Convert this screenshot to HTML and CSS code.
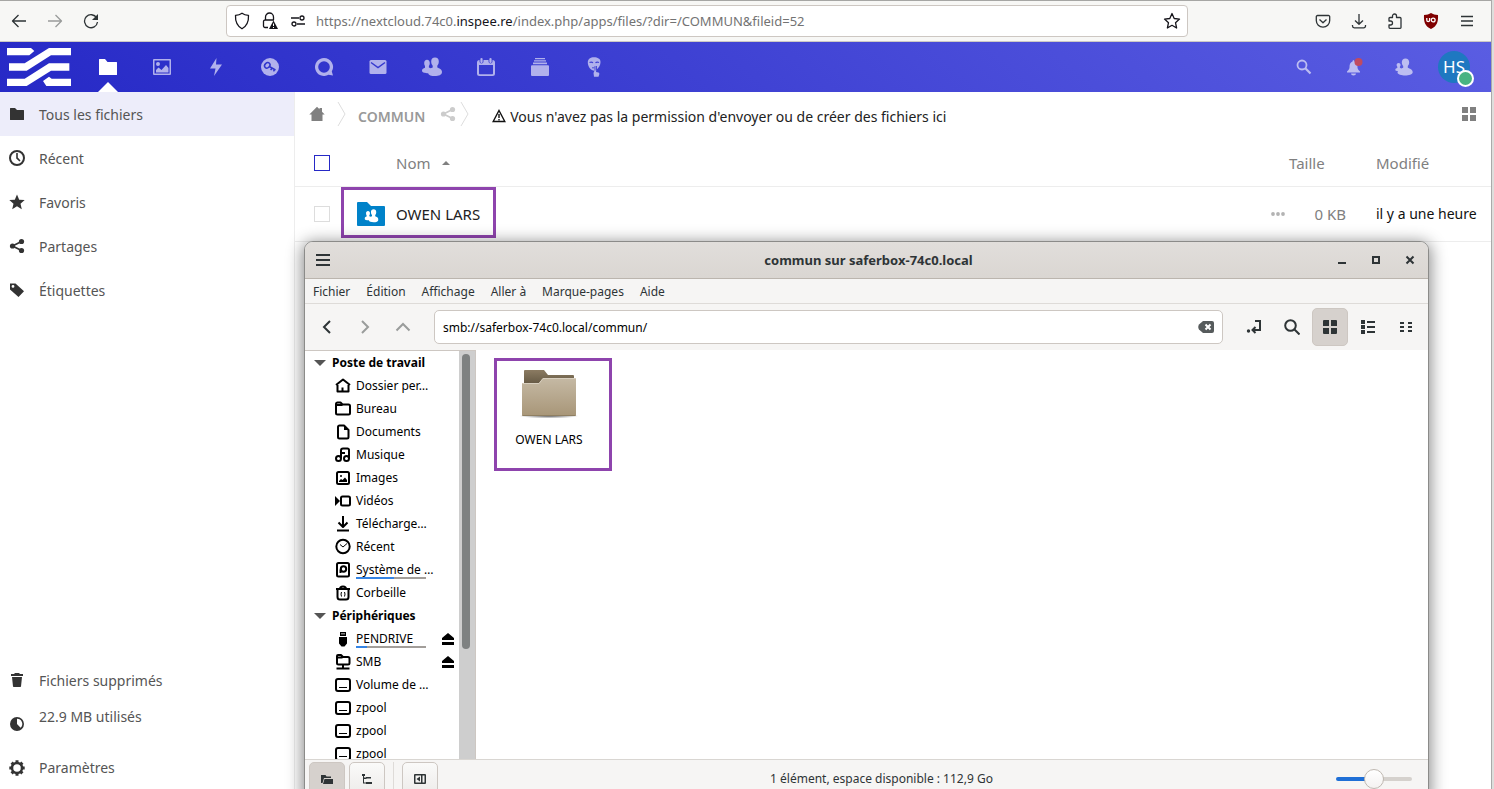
FILE: index.html
```html
<!DOCTYPE html>
<html lang="fr">
<head>
<meta charset="utf-8">
<title>COMMUN - Fichiers</title>
<link rel="stylesheet" href="styles.css">
</head>
<body>
<div class="desktop">
<div class="browser">
  <div class="chrome">
    <button class="tool" aria-label="Précédent"><svg width="16" height="16" viewBox="0 0 16 16"><path class="line" d="M15 8H1.500M7.500 2L1.500 8l6 6"/></svg></button>
    <button class="tool faded" aria-label="Suivant"><svg width="16" height="16" viewBox="0 0 16 16"><path class="line" d="M1 8h13.500M8.500 2l6 6-6 6"/></svg></button>
    <button class="tool" aria-label="Actualiser"><svg width="16" height="16" viewBox="0 0 16 16"><path class="line" d="M13.700 5A6.500 6.500 0 1 0 14.500 9"/><path d="M15 1v6H9z"/></svg></button>
    <div class="address">
      <svg width="16" height="18" viewBox="0 0 16 18"><path class="line" d="M8 1.200c2 1.500 4 2 6.500 2.200C14.800 9.500 13 14 8 16.800 3 14 1.200 9.500 1.500 3.400 4 3.200 6 2.700 8 1.200z"/></svg>
      <svg width="16" height="18" viewBox="0 0 16 18"><path class="line" d="M3.500 8V5a4 4 0 0 1 8 0v3M6 15.500H3a1.500 1.500 0 0 1-1.500-1.500V9.500A1.500 1.500 0 0 1 3 8h9"/><path d="M11.500 8.500L16 17H7z"/><path stroke="#fff" d="M11.500 11.500v2.500M11.500 15v1"/></svg>
      <svg width="16" height="16" viewBox="0 0 16 16"><path class="line" d="M1 5h8M7 11h8"/><circle class="line" cx="12" cy="5" r="2"/><circle class="line" cx="4" cy="11" r="2"/></svg>
      <div class="url" role="textbox" contenteditable="true" spellcheck="false" aria-label="Adresse">https://nextcloud.74c0.<b>inspee.re</b>/index.php/apps/files/?dir=/COMMUN&amp;fileid=52</div>
      <svg width="18" height="18" viewBox="0 0 18 18"><path class="line" d="M9 1.500l2.200 5 5.300.6-4 3.600 1.100 5.300L9 13.300 4.400 16l1.100-5.300-4-3.600 5.300-.6z"/></svg>
    </div>
    <button class="tool" aria-label="Pocket"><svg width="16" height="16" viewBox="0 0 16 16"><path class="line" d="M2.500 2.500h11a1.200 1.200 0 0 1 1.200 1.200V7.500a6.700 6.700 0 0 1-13.400 0V3.700a1.200 1.200 0 0 1 1.200-1.200zM4.500 6.500L8 9.800l3.500-3.300"/></svg></button>
    <button class="tool" aria-label="Téléchargements"><svg width="16" height="16" viewBox="0 0 16 16"><path class="line" d="M8 1v10M4 7.500L8 11.300l4-3.800M1.500 12v1A1.800 1.800 0 0 0 3.300 14.800h9.400A1.800 1.800 0 0 0 14.500 13v-1"/></svg></button>
    <button class="tool" aria-label="Extensions"><svg width="16" height="16" viewBox="0 0 16 16"><path class="line" d="M5.500 4.500V3a2 2 0 0 1 4 0v1.500H13a1 1 0 0 1 1 1V14.500a.8.800 0 0 1-.8.800H3a1 1 0 0 1-1-1V12h1.500a1.800 1.800 0 0 0 0-4H2V5.500a1 1 0 0 1 1-1z"/></svg></button>
    <button class="tool" aria-label="uBlock Origin"><svg width="16" height="16" viewBox="0 0 16 16"><path fill="#800000" d="M8 0c2 1.300 4 2 7 2 .3 6-.5 11-7 14C1.500 13 .7 8 1 2c3 0 5-.7 7-2z"/><path fill="none" stroke="#fff" stroke-width="1.300" d="M3.800 5v2.300a1.300 1.300 0 0 0 2.800 0V5"/><circle cx="10.200" cy="7" r="1.900" fill="none" stroke="#fff" stroke-width="1.300"/></svg></button>
    <button class="tool" aria-label="Menu"><svg width="16" height="16" viewBox="0 0 16 16"><path class="line" d="M2 3.500h12M2 8h12M2 12.500h12"/></svg></button>
  </div>

  <header class="appbar">
    <svg class="logo" width="64" height="38" viewBox="0 0 192 114"><path d="M0 0h72l10 9-15 13H0zM6 46h47L126 0h66v22h-60L59 68H6zM0 92h53l73-46h61v22h-55L59 114H0zM192 92h-58l-8-6-18 13 10 15h74z"/></svg>
    <nav class="apps" aria-label="Applications">
      <a class="app current" href="#" aria-label="Fichiers"><svg width="20" height="20" viewBox="0 0 20 20"><path d="M1.500 2H7l2.500 3H18.500a.5.500 0 0 1 .5.500v12a.5.500 0 0 1-.5.500h-17a.5.500 0 0 1-.5-.5v-15a.5.500 0 0 1 .5-.5z"/></svg></a>
      <a class="app" href="#" aria-label="Photos"><svg width="20" height="20" viewBox="0 0 20 20"><path fill-rule="evenodd" d="M2 2h16a1 1 0 0 1 1 1v14a1 1 0 0 1-1 1H2a1 1 0 0 1-1-1V3a1 1 0 0 1 1-1zm.5 1.500v13h15v-13zM4 15.500V13l2.500-2.500L9.500 13 14 8l2.500 3v4.500zM6 5a2 2 0 1 1 0 4 2 2 0 0 1 0-4z"/></svg></a>
      <a class="app" href="#" aria-label="Activité"><svg width="20" height="20" viewBox="0 0 20 20"><path d="M10.500 1L4 11.500h5.500L8 19l8-11.500h-6z"/></svg></a>
      <a class="app" href="#" aria-label="Mots de passe"><svg width="20" height="20" viewBox="0 0 20 20"><circle cx="10" cy="10" r="9"/><g fill="none" stroke="#3035cc" stroke-width="1.500"><ellipse cx="7.300" cy="8.300" rx="3" ry="2.400" transform="rotate(-45 7.300 8.300)"/><path d="M9.300 9.500l6.200 3.500M12 11l-1.300 2.200M14.500 12.500l-1 1.800"/></g></svg></a>
      <a class="app" href="#" aria-label="Discussion"><svg width="20" height="20" viewBox="0 0 20 20"><path fill-rule="evenodd" d="M10 1a9 9 0 0 1 7.800 13.500L19 18.500 14.500 17.800A9 9 0 1 1 10 1zm0 3.200a5.800 5.800 0 1 0 0 11.600 5.800 5.800 0 0 0 0-11.600z"/></svg></a>
      <a class="app" href="#" aria-label="E-mail"><svg width="20" height="20" viewBox="0 0 20 20"><rect x="1.500" y="3" width="17" height="14" rx="1.500"/><path fill="none" stroke="#373acf" stroke-width="1.500" d="M3 5.500l7 5 7-5"/></svg></a>
      <a class="app" href="#" aria-label="Contacts"><svg width="20" height="20" viewBox="0 0 20 20"><use href="#people"/></svg></a>
      <a class="app" href="#" aria-label="Agenda"><svg width="20" height="20" viewBox="0 0 20 20"><path fill-rule="evenodd" d="M3.500 3h13A2.500 2.500 0 0 1 19 5.500v11a2.500 2.500 0 0 1-2.500 2.500h-13A2.500 2.500 0 0 1 1 16.500v-11A2.500 2.500 0 0 1 3.500 3zM3 8v8.500a.7.700 0 0 0 .7.700h12.600a.7.700 0 0 0 .7-.7V8z"/><path stroke="#3d3ed1" stroke-width="4" stroke-linecap="round" d="M5.500 2.500v2M14.500 2.500v2"/><path stroke="#b1b1ec" stroke-width="2.200" stroke-linecap="round" d="M5.500 2v3M14.500 2v3"/></svg></a>
      <a class="app" href="#" aria-label="Deck"><svg width="20" height="20" viewBox="0 0 20 20"><path d="M5 1h10v1.300H5zM4 3.300h12v1.300H4zM3 5.600h14v1.600H3zM2 8.300h16a1 1 0 0 1 1 1V18a1 1 0 0 1-1 1H2a1 1 0 0 1-1-1V9.300a1 1 0 0 1 1-1z"/></svg></a>
      <a class="app" href="#" aria-label="Secrets"><svg width="20" height="20" viewBox="0 0 20 20"><path d="M10 .300c3.700 0 6.500 1.500 6.500 4.700 0 3-1.500 5.500-4 7.800L12 15l2.500.5c1 .3 1 1.500.6 2.500l-.6 1.700H10L9.500 16l1-2.200C7 13.800 3.800 9.500 3.800 5.500 3.800 2 6.500.300 10 .300z"/><g fill="none" stroke="#4243d3" stroke-width="1.300"><path d="M5.500 5.500q2-1 3.500.3M11.500 5.800q1.500-1.300 3.500-.3"/><path stroke-width=".900" d="M8 10.800h2.500M11 9v4.500M12.500 9v4.500"/></g></svg></a>
    </nav>
    <div class="account">
      <button class="app" aria-label="Rechercher"><svg width="16" height="16" viewBox="0 0 16 16"><circle cx="6" cy="6" r="4.500" fill="none" stroke="#bcbdf1" stroke-width="1.800"/><path stroke="#bcbdf1" stroke-width="2.200" d="M9.300 9.300l5.200 5.200"/></svg></button>
      <button class="app" aria-label="Notifications"><svg width="18" height="18" viewBox="0 0 18 18"><path d="M8 2a1.500 1.500 0 0 1 1.500 1.500C12 4.500 12.500 6.500 12.500 9.500c0 1.500 1 2.500 2.500 4v1H2v-1c1.500-1.500 2.500-2.500 2.500-4 0-3 .5-5 3-6zM6 15.500h5a2.500 2 0 0 1-5 0z"/><circle cx="13.500" cy="4" r="4" fill="#c04b60"/></svg></button>
      <button class="app" aria-label="Contacts"><svg width="18" height="18" viewBox="0 0 18 18"><path d="M10.500.500c2.200 0 3.700 1.500 3.700 3.800 0 1.500-.6 2.900-1.400 3.800v1.700c1.800.8 4.900 1.700 4.900 4.500 0 2.500-4 3.200-7.500 3.200S2.500 16.500 2.500 14.500c0-.5.200-1 .5-1.500-1.500 0-2.700-.3-2.700-1.300s1-1.400 2-1.700V8.800C1.800 8.200 1.600 7.500 1.600 7c0-1.300.8-2 2-2s2 .7 2 2c0 .5-.2 1.200-.7 1.800v1l1.300.7 2-.8V8.100c-.8-.9-1.400-2.300-1.400-3.800C6.800 2 8.300.500 10.500.500z"/></svg></button>
      <button class="app" aria-label="Compte HS"><span class="avatar">HS<span class="online"></span></span></button>
    </div>
  </header>

  <div class="workspace">
    <nav class="sidebar" aria-label="Fichiers">
      <a class="entry selected" href="#"><svg width="16" height="16" viewBox="0 0 16 16"><path d="M1.500 2H6l2 2h6.500a.5.500 0 0 1 .5.500v9a.5.500 0 0 1-.5.500h-13a.5.500 0 0 1-.5-.5v-11a.5.500 0 0 1 .5-.5z"/></svg>Tous les fichiers</a>
      <a class="entry" href="#"><svg width="16" height="16" viewBox="0 0 16 16"><circle cx="8" cy="8" r="7" fill="none" stroke="#333" stroke-width="2"/><path d="M7.200 3h1.600v4.500l2.700 3-1 1L7.200 8.500z"/></svg>Récent</a>
      <a class="entry" href="#"><svg width="16" height="16" viewBox="0 0 16 16"><path d="M8 .500l2.200 5.200 5.500.4-4.200 3.600 1.300 5.500L8 12.300l-4.800 2.900 1.300-5.500L.3 6.100l5.500-.4z"/></svg>Favoris</a>
      <a class="entry" href="#"><svg width="16" height="16" viewBox="0 0 16 16"><use href="#share"/></svg>Partages</a>
      <a class="entry" href="#"><svg width="16" height="16" viewBox="0 0 16 16"><path fill-rule="evenodd" d="M1 1.500h5.500L15 9.300 9.500 15 1 7.500zM4 3a1.400 1.400 0 1 0 0 2.800A1.400 1.400 0 0 0 4 3z"/></svg>Étiquettes</a>
      <a class="entry trash" href="#"><svg width="16" height="16" viewBox="0 0 16 16"><path d="M6 1h4l1 1h3v2H2V2h3zM3 5h10l-1 9.500-.6.500H4.600L4 14.500z"/></svg>Fichiers supprimés</a>
      <div class="entry quota"><svg width="16" height="16" viewBox="0 0 16 16"><path fill-rule="evenodd" d="M8 1a7 7 0 1 1 0 14A7 7 0 0 1 8 1zm0 1.800V8l3.600 3.800A5.200 5.200 0 0 0 8 2.800z"/></svg><span>22.9 MB utilisés</span></div>
      <button class="entry settings"><svg width="16" height="16" viewBox="0 0 16 16"><circle cx="8" cy="8" r="5" fill="none" stroke="#333" stroke-width="2.500"/><path stroke="#333" stroke-width="3" d="M8 .300v3M8 12.700v3M.300 8h3M12.700 8h3M2.600 2.600l2 2M11.400 11.400l2 2M2.600 13.400l2-2M11.400 4.600l2-2"/></svg>Paramètres</button>
    </nav>

    <main class="files">
      <div class="controls">
        <nav class="crumbs" aria-label="Fil d'Ariane">
          <a class="home" href="#" aria-label="Accueil"><svg width="16" height="16" viewBox="0 0 16 16"><path d="M8 .800l2.500 2.400V2H13v3.700L15.700 8.500H13.500V15H2.500V8.500H.3z"/></svg></a>
          <svg class="sep" width="9" height="24" viewBox="0 0 9 24"><path d="M1 0l7 12-7 12"/></svg>
          <a class="folder" href="#">COMMUN</a>
          <svg class="shared" width="16" height="16" viewBox="0 0 16 16"><use href="#share"/></svg>
          <svg class="sep" width="9" height="24" viewBox="0 0 9 24"><path d="M1 0l7 12-7 12"/></svg>
        </nav>
        <p class="notice"><svg width="14" height="14" viewBox="0 0 14 14"><path fill="none" stroke="#111" stroke-width="1.400" d="M7 1.500l5.800 11H1.200z"/><path stroke="#111" stroke-width="1.400" d="M7 5v4M7 10v1.500"/></svg>Vous n'avez pas la permission d'envoyer ou de créer des fichiers ici</p>
        <button class="view" aria-label="Vue en grille"><svg width="16" height="16" viewBox="0 0 16 16"><path d="M1 1h6v6H1zM9 1h6v6H9zM1 9h6v6H1zM9 9h6v6H9z"/></svg></button>
      </div>
      <table class="list">
        <thead>
          <tr>
            <th class="pick"><input type="checkbox" class="tick all" aria-label="Tout sélectionner"></th>
            <th class="name"><button class="sort">Nom<svg width="8" height="4" viewBox="0 0 8 4"><path d="M0 4l4-4 4 4z"/></svg></button></th>
            <th class="size">Taille</th>
            <th class="date">Modifié</th>
          </tr>
        </thead>
        <tbody>
          <tr>
            <td class="pick"><input type="checkbox" class="tick" aria-label="Sélectionner OWEN LARS"></td>
            <td class="name"><div class="file"><a class="filelink" href="#"><svg width="28" height="28" viewBox="0 0 28 28"><path fill="#0082c9" d="M0 3a1 1 0 0 1 1-1h9l4 4h13a1 1 0 0 1 1 1v18a1 1 0 0 1-1 1H1a1 1 0 0 1-1-1z"/><svg class="badge" x="7.500" y="9" width="14" height="14" viewBox="0 0 20 20"><use href="#people"/></svg></svg>OWEN LARS</a><button class="more" aria-label="Actions"><svg width="16" height="4" viewBox="0 0 16 4"><circle cx="3" cy="2" r="1.900"/><circle cx="8" cy="2" r="1.900"/><circle cx="13" cy="2" r="1.900"/></svg></button></div></td>
            <td class="size">0 KB</td>
            <td class="date">il y a une heure</td>
          </tr>
        </tbody>
      </table>
    </main>
  </div>
</div>
<div class="behind"></div>

<section class="window" aria-label="Gestionnaire de fichiers">
  <div class="titlebar">
    <button class="plain" aria-label="Menu"><svg width="16" height="16" viewBox="0 0 16 16"><path class="line bold" d="M1 3h14M1 8h14M1 13h14"/></svg></button>
    <h1>commun sur saferbox-74c0.local</h1>
    <div class="wincontrols">
      <button class="plain" aria-label="Réduire"><svg width="10" height="10" viewBox="0 0 10 10"><path d="M1 7h8v2H1z"/></svg></button>
      <button class="plain" aria-label="Agrandir"><svg width="10" height="10" viewBox="0 0 10 10"><path class="line bold" d="M2 2h6v6H2z"/></svg></button>
      <button class="plain" aria-label="Fermer"><svg width="10" height="10" viewBox="0 0 10 10"><path class="line bold" d="M1.500 1.500l7 7M8.500 1.500l-7 7"/></svg></button>
    </div>
  </div>
  <div class="menubar">
    <button>Fichier</button><button>Édition</button><button>Affichage</button><button>Aller à</button><button>Marque-pages</button><button>Aide</button>
  </div>
  <div class="toolbar">
    <button class="btn" aria-label="Précédent"><svg width="16" height="16" viewBox="0 0 16 16"><path class="line bold" d="M11 2L5 8l6 6"/></svg></button>
    <button class="btn faded" aria-label="Suivant"><svg width="16" height="16" viewBox="0 0 16 16"><path class="line bold" d="M5 2l6 6-6 6"/></svg></button>
    <button class="btn faded" aria-label="Dossier parent"><svg width="16" height="16" viewBox="0 0 16 16"><path class="line bold" d="M1.500 11.500L8 5l6.500 6.500"/></svg></button>
    <div class="path">
      <input type="text" aria-label="Emplacement" value="smb://saferbox-74c0.local/commun/" spellcheck="false">
      <button class="plain" aria-label="Effacer"><svg width="16" height="12" viewBox="0 0 16 12"><path fill="#565b5c" d="M5 0h9a2 2 0 0 1 2 2v8a2 2 0 0 1-2 2H5L1 8.500Q-.5 6 1 3.500z"/><path stroke="#fff" stroke-width="2" d="M7.500 3.500l5 5M12.500 3.500l-5 5"/></svg></button>
    </div>
    <button class="btn" aria-label="Basculer l'emplacement"><svg width="16" height="16" viewBox="0 0 16 16"><path class="line bold" d="M9 2h5v9H7M9.500 8L6.500 11l3 3"/><circle cx="2.500" cy="12" r="1.700"/></svg></button>
    <button class="btn" aria-label="Rechercher"><svg width="16" height="16" viewBox="0 0 16 16"><circle class="line bold" cx="6.500" cy="6.500" r="5.300"/><path class="line bold" d="M10.500 10.500l5 5"/></svg></button>
    <button class="btn on" aria-label="Icônes"><svg width="16" height="16" viewBox="0 0 16 16"><path d="M2 1h5v6H1V2a1 1 0 0 1 1-1zM9 1h5a1 1 0 0 1 1 1v5H9zM1 9h6v6H2a1 1 0 0 1-1-1zM9 9h6v5a1 1 0 0 1-1 1H9z"/></svg></button>
    <button class="btn" aria-label="Liste"><svg width="16" height="16" viewBox="0 0 16 16"><path d="M1 1h4v4H1zM1 6h4v4H1zM1 11h4v4H1zM7 2h8v2H7zM7 7h8v2H7zM7 12h8v2H7z"/></svg></button>
    <button class="btn" aria-label="Compact"><svg width="16" height="16" viewBox="0 0 16 16"><path d="M2 3h4v2H2zM2 7h4v2H2zM2 11h4v2H2zM10 3h4v2h-4zM10 7h4v2h-4zM10 11h4v2h-4z"/></svg></button>
  </div>
  <div class="panes">
    <div class="places">
      <div class="tree">
        <h2><svg width="12" height="6" viewBox="0 0 12 6"><path d="M0 0h12L6 6z"/></svg>Poste de travail</h2>
        <a href="#"><svg class="ico" viewBox="0 0 16 16"><path d="M1 7l7-5.500L15 7M2.500 7v6.500h11V7M7.500 13.500V9.500"/></svg>Dossier per…</a>
        <a href="#"><svg class="ico" viewBox="0 0 16 16"><path d="M1 4.500V3a1.500 1.500 0 0 1 1.500-1.500h3L7.500 3.500h6A1.500 1.500 0 0 1 15 5v7a1.500 1.500 0 0 1-1.500 1.500h-11A1.500 1.500 0 0 1 1 12zM1.500 4h6"/></svg>Bureau</a>
        <a href="#"><svg class="ico" viewBox="0 0 16 16"><path d="M4.500 1.500H9L13.500 6v7a1.500 1.500 0 0 1-1.500 1.500H4.500A1.500 1.500 0 0 1 3 13V3a1.500 1.500 0 0 1 1.500-1.500z"/><path class="solid" d="M9 1.500L13.500 6H9z"/></svg>Documents</a>
        <a href="#"><svg class="ico" viewBox="0 0 16 16"><path d="M6 11.500V3.500A2 2 0 0 1 8 1.500h4.500a1.500 1.500 0 0 1 1.500 1.500v8.500M6.500 6H10"/><circle cx="3.500" cy="11.500" r="2.500"/><circle cx="11.500" cy="11.500" r="2.500"/></svg>Musique</a>
        <a href="#"><svg class="ico" viewBox="0 0 16 16"><rect x="2" y="2" width="12" height="12" rx="1.500"/><path class="solid" d="M4 12V11l2-2 1.500 1L10 7.500l2 2.500v2z"/><circle class="solid" cx="6" cy="6" r="1"/></svg>Images</a>
        <a href="#"><svg class="ico" viewBox="0 0 16 16"><rect x="6" y="3.500" width="9" height="9" rx="1.500"/><path class="solid" d="M0 3l5 5-5 5z"/></svg>Vidéos</a>
        <a href="#"><svg class="ico" viewBox="0 0 16 16"><path d="M8 0v11M3.500 6.500L8 11l4.500-4.500M2 14.500h12"/></svg>Télécharge…</a>
        <a href="#"><svg class="ico" viewBox="0 0 16 16"><circle cx="8" cy="7.500" r="6.700"/><path class="thin" d="M5 5.500L8 8l4-3.500"/></svg>Récent</a>
        <a href="#"><svg class="ico" viewBox="0 0 16 16"><rect x="2" y="1" width="12" height="13.500" rx="1.500"/><circle cx="8.500" cy="7" r="2.700"/><path d="M5.500 11V7.500"/></svg>Système de …<span class="gauge"><span style="width:54%"></span></span></a>
        <a href="#"><svg class="ico" viewBox="0 0 16 16"><path d="M1 4h14M5 4a3 2.500 0 0 1 6 0M2.500 4v8A2.500 2.500 0 0 0 5 14.500h6a2.500 2.500 0 0 0 2.500-2.500V4"/><path class="thin" d="M6.500 7q-1 2 0 4.500M9.500 7q1 2 0 4.500"/></svg>Corbeille</a>
        <h2><svg width="12" height="6" viewBox="0 0 12 6"><path d="M0 0h12L6 6z"/></svg>Périphériques</h2>
        <a href="#"><svg class="ico" viewBox="0 0 16 16"><path class="solid" fill-rule="evenodd" d="M5 1h6v4H5zM6.500 2v1.500h1V2zM8.500 2v1.500h1V2zM4 6h8v6.500l-2.500 3h-3L4 12.500z"/></svg>PENDRIVE<span class="gauge"><span style="width:16%"></span></span><svg class="eject" width="12" height="12" viewBox="0 0 12 12"><path d="M6 0l6 5v2H0V5zM0 9h12v3H0z"/></svg></a>
        <a href="#"><svg class="ico" viewBox="0 0 16 16"><path d="M2 3.500V2a1 1 0 0 1 1-1h3l2 2h5a1.500 1.500 0 0 1 1.500 1.500V9a1.500 1.500 0 0 1-1.500 1.500H3.500A1.500 1.500 0 0 1 2 9zM2 3.500h5.500M8 10.500v3.500M1.500 14.500h13"/></svg>SMB<svg class="eject" width="12" height="12" viewBox="0 0 12 12"><path d="M6 0l6 5v2H0V5zM0 9h12v3H0z"/></svg></a>
        <a href="#"><svg class="ico" viewBox="0 0 16 16"><use href="#drive"/></svg>Volume de …</a>
        <a href="#"><svg class="ico" viewBox="0 0 16 16"><use href="#drive"/></svg>zpool</a>
        <a href="#"><svg class="ico" viewBox="0 0 16 16"><use href="#drive"/></svg>zpool</a>
        <a href="#"><svg class="ico" viewBox="0 0 16 16"><use href="#drive"/></svg>zpool</a>
      </div>
      <div class="scroll"><div class="thumb"></div></div>
    </div>
    <div class="content">
      <a class="item" href="#">
        <svg width="60" height="50" viewBox="0 0 60 50">
          <defs>
            <linearGradient id="front" x1="0" y1="0" x2="0" y2="1"><stop offset="0" stop-color="#c5b9a4"/><stop offset="1" stop-color="#a89678"/></linearGradient>
            <linearGradient id="back" x1="0" y1="0" x2="0" y2="1"><stop offset="0" stop-color="#8b7b62"/><stop offset="1" stop-color="#655944"/></linearGradient>
            <radialGradient id="shade"><stop offset="0" stop-color="#000" stop-opacity=".6"/><stop offset="1" stop-color="#000" stop-opacity="0"/></radialGradient>
          </defs>
          <ellipse cx="30" cy="47" rx="30" ry="2.500" fill="url(#shade)"/>
          <path fill="url(#back)" d="M5 2a1 1 0 0 1 1-1h19l4 5h25a1 1 0 0 1 1 1v8H5z"/>
          <path fill="url(#front)" d="M3 14h17l4-5h32a1 1 0 0 1 1 1v36a1 1 0 0 1-1 1H4a1 1 0 0 1-1-1z"/>
          <path fill="none" stroke="#d8cfbf" d="M3.500 14.500H20l4-5h32.500"/>
          <path fill="none" stroke="#8f7f62" d="M3.500 46.500h53"/>
        </svg>
        OWEN LARS
      </a>
    </div>
  </div>
  <div class="statusbar">
    <div class="group">
      <button class="btn on" aria-label="Raccourcis"><svg width="12" height="12" viewBox="0 0 12 12"><path d="M0 2h4.500l1 1.500H10V5H3L1.500 10H0zM3.500 6H12v5H2z"/></svg></button>
      <button class="btn raised" aria-label="Arborescence"><svg width="12" height="12" viewBox="0 0 12 12"><path d="M1 1h3v2H3v1.500h2V4h5v1.500H5.500V6H3v3.500h2V9h6v2H5V10.500H2V3H1z"/></svg></button>
      <span class="rule"></span>
      <button class="btn raised" aria-label="Masquer le panneau"><svg width="12" height="12" viewBox="0 0 12 12"><path fill-rule="evenodd" d="M1 1h10a1 1 0 0 1 1 1v8a1 1 0 0 1-1 1H1a1 1 0 0 1-1-1V2a1 1 0 0 1 1-1zm.5 1.500v7H7v-7zm7 0v7h2v-7zM6 3.500v5L2.500 6z"/></svg></button>
    </div>
    <span class="summary">1 élément, espace disponible : 112,9 Go</span>
    <input class="zoom" type="range" min="0" max="100" value="50" aria-label="Zoom">
  </div>
</section>
</div>

<svg class="defs" width="0" height="0" aria-hidden="true">
  <symbol id="people" viewBox="0 0 20 20"><path d="M13 .500c2.500 0 3.800 1.600 3.800 4 0 1.800-.6 3.200-1.500 4.200v1.800c1.800.8 4.700 1.800 4.700 4.500 0 3-3.500 4-7 4s-6.500-.8-6.800-2.800C3 16.200 0 15.800 0 13.500c0-1.700 1.500-2.300 3-2.800V9C2.400 8.300 2.200 7.200 2.200 6c0-2 1-3.300 2.800-3.300S7.800 4 7.800 6c0 1.200-.3 2.300-.9 3v1.500l1.800.7 2-.8V8.700C9.800 7.700 9.200 6.300 9.200 4.500 9.200 2.100 10.500.500 13 .500z"/></symbol>
  <symbol id="share" viewBox="0 0 16 16"><circle cx="3.500" cy="8" r="2.600"/><circle cx="12.500" cy="3.500" r="2.600"/><circle cx="12.500" cy="12.500" r="2.600"/><path fill="none" stroke="currentColor" stroke-width="1.700" d="M12.500 3.500L3.500 8l9 4.500"/></symbol>
  <symbol id="drive" viewBox="0 0 16 16"><rect x="1" y="2" width="14" height="12" rx="2"/><path d="M4 10.500h8" stroke-width="1"/></symbol>
</svg>
</body>
</html>
```

FILE: styles.css
```css
* { box-sizing: border-box; }
body { margin: 0; font-family: "Noto Sans", sans-serif; font-size: 15px; color: #222; }
button { font: inherit; color: inherit; border: 0; padding: 0; background: none; display: flex; align-items: center; justify-content: center; }
a { color: inherit; text-decoration: none; }
h1, h2, p { margin: 0; font-size: inherit; }
svg { fill: currentColor; flex: none; display: block; }
.defs { position: absolute; }
.line { fill: none; stroke: currentColor; stroke-width: 1.3; stroke-linejoin: round; }
.line.bold { stroke-width: 2; stroke-linejoin: miter; }

.desktop { position: relative; display: flex; height: 100vh; overflow: hidden; background: #fff; }
.browser { flex: 1; min-width: 0; display: flex; flex-direction: column; border-right: 1px solid #aaa; }
.behind { width: 2px; background: #dededc; }

.chrome { display: flex; align-items: center; height: 42px; padding: 0 6px 0 1px; background: #f7f7f5; border-top: 1px solid #a6a6a4; border-bottom: 1px solid #ccc9c5; color: #2e3436; }
.tool { width: 36px; height: 36px; }
.faded { color: #9a9c9b; }
.address { flex: 1; min-width: 0; display: flex; align-items: center; gap: 12px; height: 32px; margin: 0 117px; padding: 0 6px 0 7px; background: #fff; border: 1px solid #cdc7c2; border-radius: 4px; color: #15141a; }
.url { flex: 1; min-width: 0; margin-left: -2px; font-size: 13px; line-height: 20px; color: #737373; white-space: nowrap; overflow: hidden; outline: 0; }
.url b { font-weight: 400; color: #15141a; }

.appbar { display: flex; align-items: center; height: 50px; padding: 0 12px 0 7px; background: linear-gradient(40deg, #2629c6 0%, #5a5de2 100%); color: #b1b1ec; }
.logo { color: #fff; }
.apps { display: flex; margin-left: 10px; }
.app { position: relative; display: flex; align-items: center; justify-content: center; width: 54px; height: 50px; }
.app.current { color: #fff; }
.app.current::after { content: ""; position: absolute; bottom: 0; left: 17px; border: 10px solid transparent; border-top: 0; border-bottom-color: #fff; }
.account { display: flex; margin-left: auto; color: #bcbdf1; }
.account .app { width: 50px; }
.avatar { position: relative; width: 32px; height: 32px; border-radius: 50%; background: #1e78c1; color: #fff; font-size: 17px; line-height: 32px; text-align: center; }
.online { position: absolute; right: -4px; bottom: -4px; width: 17px; height: 17px; border: 2px solid #fff; border-radius: 50%; background: #49b382; }

.workspace { flex: 1; min-height: 0; display: flex; }
.sidebar { display: flex; flex-direction: column; width: 295px; border-right: 1px solid #ededed; font-size: 14px; color: #555; }
.entry { display: flex; align-items: center; justify-content: flex-start; gap: 14px; height: 44px; padding: 0 9px; }
.entry svg { color: #333; }
.selected { background: #ededfa; }
.trash { margin-top: auto; }
.quota { align-items: flex-start; line-height: 20px; }
.quota span { padding-top: 5px; }
.quota svg { margin-top: 14px; }
.settings { height: 43px; }

.files { flex: 1; min-width: 0; }
.controls { display: flex; align-items: center; height: 48px; padding: 0 14px; font-size: 14px; }
.crumbs { display: flex; align-items: center; color: #999; }
.home { color: #808080; margin: 0 12px 4px 0; }
.sep { fill: none; stroke: #ddd; margin-bottom: 4px; }
.folder { font-weight: 600; margin: 0 15px 0 12px; }
.shared { color: #ccc; margin: 0 4px 4px 0; }
.notice { display: flex; align-items: center; gap: 4px; margin-left: 23px; color: #222; white-space: nowrap; }
.view { margin: 0 0 4px auto; color: #808080; }

.list { width: 100%; table-layout: fixed; border-collapse: collapse; }
.list th, .list td { padding: 0; border-bottom: 1px solid #ededed; text-align: left; font-weight: 400; color: #808080; white-space: nowrap; vertical-align: middle; }
.list th { height: 46px; }
.list td { height: 55px; }
.list .pick { width: 46px; padding-left: 19px; }
.list .size { width: 72px; }
.list td.size { text-align: right; padding-right: 15px; }
.list .date { width: 130px; padding-left: 15px; }
.list td.date { font-size: 14px; color: #111; }
.tick { appearance: none; display: block; width: 16px; height: 16px; margin: 0; border: 1px solid #ddd; background: #fff; }
.tick.all { border-color: #2629c6; }
.sort { gap: 11px; margin-left: 55px; }
.file { display: flex; align-items: center; height: 54px; padding-bottom: 3px; }
.filelink { display: flex; align-items: center; gap: 11px; height: 51px; padding: 3px 13px 0; border: 3px solid #8e44ad; color: #222; }
.badge { color: #fff; }
.more { margin: 4px 3px 0 auto; color: #b3b3b3; }

.window { position: absolute; left: 304px; right: 65px; top: 241px; bottom: -9px; display: flex; flex-direction: column; overflow: hidden; border: 1px solid #8b8b89; border-radius: 9px 9px 0 0; background: #f6f5f4; box-shadow: 0 3px 16px 2px rgba(0, 0, 0, .45); font-size: 12px; color: #2e3436; }
.titlebar { display: grid; grid-template-columns: 1fr auto 1fr; align-items: center; height: 37px; padding: 0 6px 0 10px; border-bottom: 1px solid #bbb5ae; background: linear-gradient(#e1dedb, #dad6d2); }
.titlebar h1 { font-size: 13px; font-weight: 700; }
.titlebar > .plain { justify-self: start; }
.wincontrols { display: flex; justify-content: flex-end; gap: 10px; }
.wincontrols .plain { width: 24px; height: 24px; }
.menubar { display: flex; gap: 16px; height: 25px; padding: 0 8px; border-bottom: 1px solid #dedbd8; }
.toolbar { display: flex; align-items: center; gap: 2px; height: 46px; padding: 0 4px; }
.btn { width: 36px; height: 38px; border: 1px solid transparent; border-radius: 5px; }
.btn.on { background: #d6d1cd; border-color: #cdc7c2; }
.path { flex: 1; min-width: 0; display: flex; align-items: center; height: 34px; margin: 0 11px; padding: 0 8px; background: #fff; border: 1px solid #cdc7c2; border-radius: 5px; }
.path input { flex: 1; min-width: 0; border: 0; padding: 0; font: inherit; color: #000; outline: 0; background: none; }

.panes { flex: 1; min-height: 0; display: flex; border-bottom: 1px solid #d9d6d2; color: #000; }
.places { display: flex; width: 171px; background: #fff; border-top: 1px solid #cdc7c2; border-right: 1px solid #cdc7c2; }
.tree { flex: 1; min-width: 0; overflow: hidden; }
.tree h2, .tree a { position: relative; display: flex; align-items: center; height: 23px; line-height: 22px; white-space: nowrap; }
.tree h2 { gap: 6px; padding-left: 9px; font-weight: 700; }
.tree h2 svg { color: #555; }
.tree a { gap: 5px; padding-left: 30px; }
.ico { width: 16px; height: 16px; overflow: visible; fill: none; stroke: #000; stroke-width: 2; stroke-linejoin: round; }
.ico .solid { fill: #000; stroke: none; }
.ico .thin { stroke-width: 1; }
.gauge { position: absolute; left: 51px; right: 33px; bottom: 2px; height: 2px; background: #a29e9a; }
.gauge span { display: block; height: 100%; background: #3584e4; }
.eject { margin: 0 5px 0 auto; }
.scroll { width: 16px; padding: 3px; background: #cecece; }
.thumb { width: 8px; height: 295px; border-radius: 4px; background: #7e8181; }
.content { flex: 1; padding: 8px 18px; background: #fff; }
.item { display: flex; flex-direction: column; align-items: center; gap: 12px; width: 118px; height: 113px; padding: 8px 8px 0 0; border: 3px solid #8e44ad; }

.statusbar { display: grid; grid-template-columns: 1fr auto 1fr; align-items: center; height: 37px; padding: 0 16px 0 4px; }
.group { display: flex; align-items: center; gap: 4px; }
.group .btn { height: 34px; }
.raised { background: linear-gradient(#fafaf9, #edebe9); border-color: #cdc7c2; }
.rule { width: 1px; height: 34px; margin: 0 4px; background: #dedbd8; }
.summary { padding-left: 42px; }
.zoom { appearance: none; justify-self: end; width: 76px; height: 20px; margin: 0; background: none; }
.zoom::-webkit-slider-runnable-track { height: 4px; border-radius: 2px; background: linear-gradient(90deg, #1f6fd6 50%, #d5d1cd 50%); }
.zoom::-webkit-slider-thumb { appearance: none; width: 20px; height: 20px; margin-top: -8px; border: 1px solid #bfb8b1; border-radius: 50%; background: linear-gradient(#fff, #f4f2f1); }
```
